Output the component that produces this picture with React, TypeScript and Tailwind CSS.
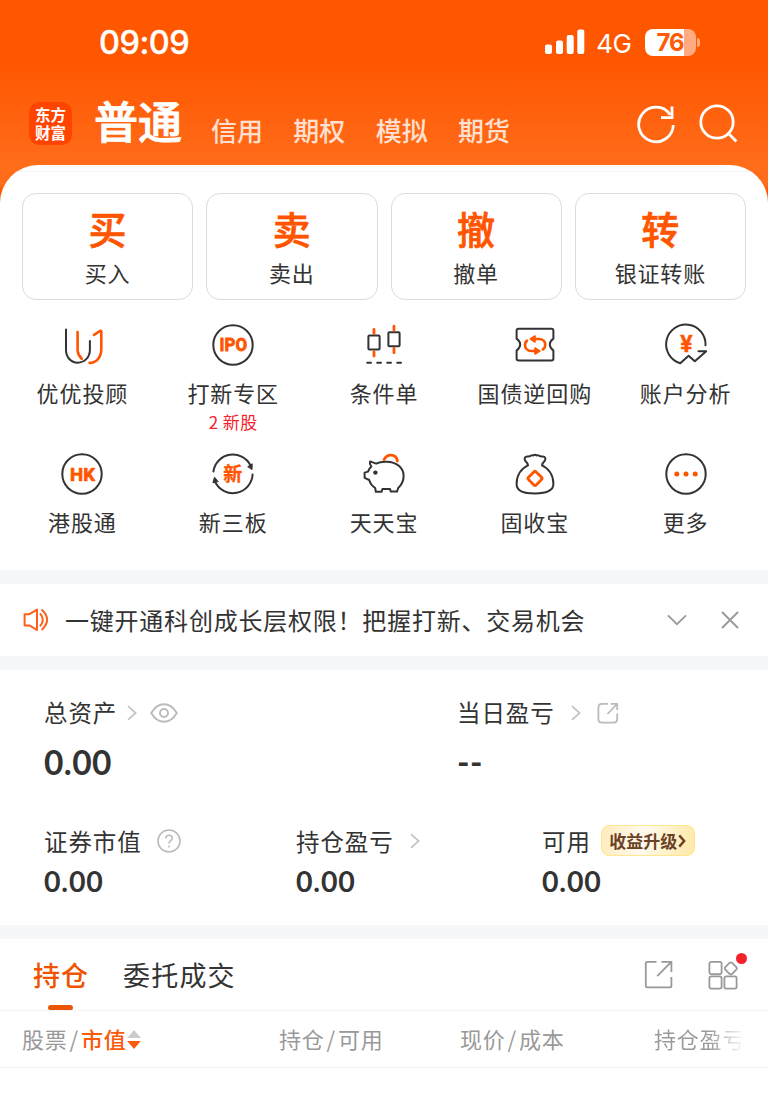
import React from "react";
import { clsx } from "clsx";

const ORANGE = "#ff5500";
const DARK = "#333333";

const TRADE_ACTIONS = [
  { glyph: "买", label: "买入" },
  { glyph: "卖", label: "卖出" },
  { glyph: "撤", label: "撤单" },
  { glyph: "转", label: "银证转账" },
];

const ACCOUNT_TABS = ["信用", "期权", "模拟", "期货"];

function IconFrame({ children }: { children: React.ReactNode }) {
  return (
    <svg
      width="42"
      height="42"
      viewBox="0 0 42 42"
      fill="none"
      stroke={DARK}
      strokeWidth="2"
      strokeLinecap="round"
      strokeLinejoin="round"
      className="overflow-visible"
    >
      {children}
    </svg>
  );
}

function AdvisorIcon() {
  return (
    <IconFrame>
      <path d="M5 5.6V26C5 33 10 38.7 16.6 38.7S28.9 33.5 28.9 26V17" />
      <g stroke={ORANGE} strokeWidth="2.6">
        <path d="M16.6 8V26.5Q16.8 31 20.8 34.8" />
        <path d="M33 10.8L39.2 6.9Q40.3 6.4 40.3 7.6V25C40.3 33.5 35.4 38.6 28.6 38.9" />
      </g>
    </IconFrame>
  );
}

function IpoIcon() {
  return (
    <IconFrame>
      <circle cx="21" cy="21" r="19.7" />
      <text
        x="7.6"
        y="27.4"
        fontSize="18.5"
        fontWeight="700"
        fontFamily="Roboto, sans-serif"
        textLength="27.4"
        lengthAdjust="spacingAndGlyphs"
        fill={ORANGE}
        stroke={ORANGE}
        strokeWidth="0.8"
      >
        IPO
      </text>
    </IconFrame>
  );
}

function ConditionIcon() {
  return (
    <IconFrame>
      <rect x="5.4" y="11.6" width="11.2" height="14" rx="1" />
      <rect x="25.4" y="8.3" width="11.2" height="14" rx="1" />
      <path d="M4.2 38.7H8M14.2 38.7H18M24.2 38.7H28M34.2 38.7H38" />
      <path
        d="M11 5.3V9.5M11 27.8V32M31 2.2V6.2M31 24.5V28.7"
        stroke={ORANGE}
        strokeWidth="2.8"
      />
    </IconFrame>
  );
}

function RepoIcon() {
  return (
    <IconFrame>
      <path d="M4.6 4.8H37.4Q39.4 4.8 39.4 6.8V14.6Q35.8 17.2 35.8 20.5T39.4 26.6V34.4Q39.4 36.4 37.4 36.4H4.6Q2.6 36.4 2.6 34.4V26.6Q6.2 23.8 6.2 20.5T2.6 14.6V6.8Q2.6 4.8 4.6 4.8Z" />
      <g stroke={ORANGE} strokeWidth="2.7">
        <path d="M20 15H24.5C29 15 31.3 17.8 31.3 20.7C31.3 22.8 30.3 24.4 28.9 25.4" />
        <path d="M22 27H17.6C13.2 27 11 24 11 20.9C11 19.2 11.8 17.6 13 16.6" />
        <path
          d="M21 12V18L16.4 15ZM21 24V30L25.8 27Z"
          fill={ORANGE}
          strokeWidth="1.6"
        />
      </g>
    </IconFrame>
  );
}

function AnalysisIcon() {
  return (
    <IconFrame>
      <path d="M40.5 21.3A19.7 19.7 0 1 0 15.3 39.2L23.6 31.7L29.8 37.2L41.2 27.2H33.5" />
      <text
        x="21.4"
        y="27.6"
        fontSize="22.5"
        fontWeight="700"
        fontFamily="Inter, sans-serif"
        textAnchor="middle"
        fill={ORANGE}
        stroke={ORANGE}
        strokeWidth="0.4"
      >
        ¥
      </text>
    </IconFrame>
  );
}

function HkIcon() {
  return (
    <IconFrame>
      <circle cx="21" cy="21" r="19.7" />
      <text
        x="9"
        y="27.5"
        fontSize="18.5"
        fontWeight="700"
        fontFamily="Roboto, sans-serif"
        textLength="25"
        lengthAdjust="spacingAndGlyphs"
        fill={ORANGE}
        stroke={ORANGE}
        strokeWidth="0.7"
      >
        HK
      </text>
    </IconFrame>
  );
}

function NewBoardIcon() {
  return (
    <IconFrame>
      <path d="M1.4 18.5A19.7 19.7 0 0 1 38.4 12.2" />
      <path d="M40.6 21.5A19.7 19.7 0 0 1 3.2 29" />
      <path d="M36 13.6L40.2 10.8L40 16.2ZM1 29.4L2.5 24.2L6 28.4Z" fill={DARK} strokeWidth="1" />
      <text
        x="20.8"
        y="27.8"
        fontSize="19"
        fontWeight="700"
        fontFamily="'Noto Sans CJK SC', sans-serif"
        textAnchor="middle"
        fill={ORANGE}
        stroke={ORANGE}
        strokeWidth="0.3"
      >
        新
      </text>
    </IconFrame>
  );
}

function PiggyIcon() {
  return (
    <IconFrame>
      <path d="M7 8.4L13.2 10.6Q17 8.6 23.6 8.8C33.6 9 40.6 14.6 40.6 23C40.6 28.4 38.2 32.2 35.2 35L34 38.6H27.8L27 36H19.4L18.6 38.8H12.8L12.2 35C9.2 33 7.2 30.6 6.2 27L1.6 24.8V19.6L5 18.6C5.6 16.6 6.8 15 8.4 13.6Q6.4 11 7 8.4Z" />
      <path d="M21 6.6C22.8 3.2 25.4 2.2 27.8 2.2C31 2.2 33.8 4.2 34.4 8" stroke={ORANGE} strokeWidth="2.8" />
      <circle cx="12.4" cy="19.6" r="2.2" fill={DARK} stroke="none" />
    </IconFrame>
  );
}

function MoneyBagIcon() {
  return (
    <IconFrame>
      <path d="M14 12.4Q13.6 10 11.2 7.8C9.8 5.4 11 3.2 13.4 3.4Q15.4 3.6 16.6 2.8Q18 1.8 19.4 2.4Q21 1.2 22.6 2.4Q24 1.8 25.4 2.8Q26.6 3.6 28.6 3.4C31 3.2 32.2 5.4 30.8 7.8Q28.4 10 28 12.4C35 15.6 39.4 22.6 39.4 31C39.4 38 33 40.4 21 40.4S2.6 38 2.6 31C2.6 22.6 7 15.6 14 12.4Z" />
      <rect
        x="15.6"
        y="20"
        width="10.8"
        height="10.8"
        rx="1.6"
        transform="rotate(45 21 25.4)"
        stroke={ORANGE}
        strokeWidth="2.8"
      />
    </IconFrame>
  );
}

function MoreIcon() {
  return (
    <IconFrame>
      <circle cx="21" cy="21" r="19.7" />
      <g fill={ORANGE} stroke="none">
        <circle cx="11.8" cy="21" r="2.5" />
        <circle cx="21" cy="21" r="2.5" />
        <circle cx="30.2" cy="21" r="2.5" />
      </g>
    </IconFrame>
  );
}

const SHORTCUTS = [
  { label: "优优投顾", icon: <AdvisorIcon /> },
  { label: "打新专区", icon: <IpoIcon />, note: "2 新股" },
  { label: "条件单", icon: <ConditionIcon /> },
  { label: "国债逆回购", icon: <RepoIcon /> },
  { label: "账户分析", icon: <AnalysisIcon /> },
  { label: "港股通", icon: <HkIcon /> },
  { label: "新三板", icon: <NewBoardIcon /> },
  { label: "天天宝", icon: <PiggyIcon /> },
  { label: "固收宝", icon: <MoneyBagIcon /> },
  { label: "更多", icon: <MoreIcon /> },
];

function StatusBar() {
  return (
    <div className="flex h-[84px] items-center justify-between pl-[99px] pr-[68px] text-white">
      <span className="mt-[3px] font-[Inter] text-[32.5px] font-medium leading-none tracking-[-0.5px] [-webkit-text-stroke:0.3px_#fff]">
        09:09
      </span>
      <div className="flex items-center">
        <svg width="40" height="26" viewBox="0 0 40 26" fill="#fff">
          <rect x="0" y="15.5" width="7" height="9.5" rx="2" />
          <rect x="11" y="11.5" width="7" height="13.5" rx="2" />
          <rect x="21.7" y="6" width="7" height="19" rx="2" />
          <rect x="32.3" y="0.5" width="7" height="24.5" rx="2" />
        </svg>
        <span className="ml-[11px] mr-px mt-[3px] font-[Inter] text-[26px] leading-none tracking-[-0.5px]">4G</span>
        <div className="ml-3 flex h-[27px] w-[51px] items-center justify-center rounded-[8px] bg-[linear-gradient(90deg,#fff_76%,#ffaa80_76%)]">
          <span className="mt-px font-[Inter] text-[24px] font-bold leading-none tracking-[-1px] text-[#ff5a05]">76</span>
        </div>
        <span className="ml-[1.5px] h-[9px] w-[3px] rounded-r-full bg-[#ffaa80]" />
      </div>
    </div>
  );
}

function TopNav() {
  return (
    <div className="flex h-[81px] items-start pl-[29px] text-white">
      <div className="mt-[18px] h-[43px] w-[43px] break-all rounded-[10px] bg-[#ff4400] py-[4px] pl-[6px] pr-[5px] text-[15.5px] font-bold leading-[17.5px]">
        东方财富
      </div>
      <h1 className="ml-[22px] mt-[10px] text-[44px] font-medium leading-[52px] [-webkit-text-stroke:0.9px_#fff]">
        普通
      </h1>
      <nav className="ml-[29px] mt-[30px] flex gap-[30.3px] text-[26px] font-medium leading-[32px] text-[#ffe0d0]">
        {ACCOUNT_TABS.map((tab) => (
          <span key={tab}>{tab}</span>
        ))}
      </nav>
      <div className="ml-auto mr-[29px] mt-[20px] flex gap-[23px]">
        <svg width="40" height="40" viewBox="0 0 40 40" fill="none" stroke="#fff" strokeWidth="2.8">
          <path d="M37.3 21A17.3 17.3 0 1 1 34.2 10.6" />
          <path d="M36 2.6V13.6H25" />
        </svg>
        <svg width="40" height="40" viewBox="0 0 40 40" fill="none" stroke="#fff" strokeWidth="2.8">
          <circle cx="18" cy="18" r="16.2" />
          <path d="M29.5 29.5L37.4 37.4" />
        </svg>
      </div>
    </div>
  );
}

function Chevron({ className }: { className?: string }) {
  return (
    <svg
      width="10"
      height="16"
      viewBox="0 0 10 16"
      fill="none"
      stroke="#c4c4c4"
      strokeWidth="1.8"
      className={className}
    >
      <path d="M1 1.2L8.6 8L1 14.8" />
    </svg>
  );
}

function NoticeBar() {
  return (
    <div className="flex h-[72px] items-center pl-[23px] pr-[29px] text-[#333]">
      <svg width="26" height="24" viewBox="0 0 26 24" fill="none" stroke="#ff5f1a" strokeWidth="2" strokeLinejoin="round">
        <path d="M1.6 6.2H6.4L14 1.6V22L6.4 17.4H1.6Z" />
        <path d="M17 5.4Q22.6 11.8 17 18.4M18.6 1.6Q29.6 11.8 18.6 22" />
      </svg>
      <span className="-mt-px ml-[16px] whitespace-nowrap text-[24px] leading-8 tracking-[0.78px]">
        一键开通科创成长层权限！把握打新、交易机会
      </span>
      <div className="ml-auto flex items-center gap-[34px]">
        <svg width="20" height="12" viewBox="0 0 20 12" fill="none" stroke="#999" strokeWidth="1.8">
          <path d="M1 1.4L10 10.2L19 1.4" />
        </svg>
        <svg width="18" height="18" viewBox="0 0 18 18" fill="none" stroke="#999" strokeWidth="1.8">
          <path d="M1 1L17 17M17 1L1 17" />
        </svg>
      </div>
    </div>
  );
}

interface MetricProps {
  label: string;
  value: string;
  large?: boolean;
  children?: React.ReactNode;
}

function Metric({ label, value, large, children }: MetricProps) {
  return (
    <div className="flex flex-col">
      <div className="flex h-[34px] items-center">
        <span className="whitespace-nowrap text-[23.5px] leading-8 tracking-[0.9px]">{label}</span>
        {children}
      </div>
      <span
        className={clsx(
          "font-[Lato] font-bold leading-10",
          large ? "mt-[13px] text-[33.5px] tracking-[0.4px]" : "mt-[3px] text-[28.5px] tracking-[0.8px]",
        )}
      >
        {value}
      </span>
    </div>
  );
}

function AssetsPanel() {
  return (
    <section className="h-[255px] pl-[44px] pt-[25px] text-[#333]">
      <div className="grid grid-cols-[413px_1fr]">
        <Metric label="总资产" value="0.00" large>
          <Chevron className="ml-[10px] mt-px" />
          <svg
            width="28"
            height="20"
            viewBox="0 0 28 20"
            fill="none"
            stroke="#bbb"
            strokeWidth="1.9"
            className="ml-[13px] mt-px"
          >
            <path d="M1.2 10Q6.4 1.2 14 1.2T26.8 10Q21.6 18.8 14 18.8T1.2 10Z" />
            <circle cx="14" cy="10" r="4" />
          </svg>
        </Metric>
        <Metric label="当日盈亏" value="--" large>
          <Chevron className="ml-[16px] mt-px" />
          <svg
            width="22"
            height="22"
            viewBox="0 0 22 22"
            fill="none"
            stroke="#bbb"
            strokeWidth="1.8"
            className="ml-[16px] mt-px"
          >
            <path d="M11 1.8H5Q1.4 1.8 1.4 5.4V17Q1.4 20.6 5 20.6H16.6Q20.2 20.6 20.2 17V11.5" />
            <path d="M10.5 12L20 2M13.8 1.8H20.2V8" />
          </svg>
        </Metric>
      </div>
      <div className="mt-[42px] grid grid-cols-[252px_246px_1fr]">
        <Metric label="证券市值" value="0.00">
          <svg
            width="24"
            height="24"
            viewBox="0 0 24 24"
            fill="none"
            stroke="#bbb"
            strokeWidth="1.6"
            className="ml-[15.5px]"
          >
            <circle cx="12" cy="12" r="11" />
            <path d="M8.8 9.6C8.8 7.4 10.2 6.2 12 6.2S15.2 7.4 15.2 9.2C15.2 11.4 12 11.8 12 14.6M12 16.6V18.4" />
          </svg>
        </Metric>
        <Metric label="持仓盈亏" value="0.00">
          <Chevron className="ml-[16px]" />
        </Metric>
        <Metric label="可用" value="0.00">
          <span className="-mt-px ml-[10px] flex h-[31px] w-[94px] items-center justify-center rounded-[8px] border border-[#ffe68f] bg-[linear-gradient(100deg,#ffecbc,#fffaf0_45%,#fff3d2_65%,#ffe9a8)] text-[17px] font-bold leading-7 text-[#6b4226]">
            收益升级
            <svg width="8" height="14" viewBox="0 0 8 14" fill="none" stroke="#6b4226" strokeWidth="2.4" className="ml-px">
              <path d="M1.2 1.4L6.2 7L1.2 12.6" />
            </svg>
          </span>
        </Metric>
      </div>
    </section>
  );
}

function PositionTabs() {
  return (
    <div className="flex h-[72px] items-start border-b border-[#f4f4f4] pl-[33px]">
      <div className="flex h-[71px] flex-col items-center">
        <span className="mt-[17px] text-[27px] font-medium leading-[38px] tracking-[1px] text-[#f05400]">持仓</span>
        <span className="mr-px mt-auto h-[5px] w-[25px] rounded-t-[3px] rounded-b-[2px] bg-[#ea5404]" />
      </div>
      <span className="ml-[34px] mt-[17px] text-[27px] leading-[38px] tracking-[1.2px] text-[#333]">委托成交</span>
      <div className="ml-auto mr-[30px] mt-[21px] flex gap-[34px]">
        <svg width="30" height="30" viewBox="0 0 30 30" fill="none" stroke="#999" strokeWidth="1.8">
          <path d="M12.5 1.8H3.4Q1.8 1.8 1.8 3.4V25.8Q1.8 27.4 3.4 27.4H25.8Q27.4 27.4 27.4 25.8V17" />
          <path d="M13.2 16.2L27 2.2M17.4 1.8H27.4V12" />
        </svg>
        <div className="relative">
          <svg width="30" height="30" viewBox="0 0 30 30" fill="none" stroke="#999" strokeWidth="1.8">
            <rect x="1.4" y="1.9" width="12.2" height="12.2" rx="1.8" />
            <rect x="1.4" y="16.4" width="12.2" height="12.2" rx="1.8" />
            <rect x="16.4" y="16.4" width="12.2" height="12.2" rx="1.8" />
            <rect x="18" y="3.6" width="9.6" height="9.6" rx="2.2" transform="rotate(45 22.8 8.4)" />
          </svg>
          <span className="absolute -right-[9px] -top-[7px] h-[11px] w-[11px] rounded-full bg-[#f5222d]" />
        </div>
      </div>
    </div>
  );
}

function TableHeader() {
  return (
    <div className="grid h-[57px] grid-cols-[257px_181px_194px_1fr] items-center border-b border-[#f2f2f2] pb-[2px] pl-[22px] text-[22px] leading-8 tracking-[0.8px] text-[#999]">
      <div className="flex items-center">
        股票
        <span className="mx-[2px]">/</span>
        <span className="font-medium text-[#fa5a0a]">市值</span>
        <svg width="14" height="19" viewBox="0 0 14 19" className="mt-[2px]">
          <path d="M7 0L13.8 8H0.2Z" fill="#ccc" />
          <path d="M7 19L13.8 11H0.2Z" fill="#fa5a0a" />
        </svg>
      </div>
      <div>
        持仓<span className="mx-[2px]">/</span>可用
      </div>
      <div>
        现价<span className="mx-[2px]">/</span>成本
      </div>
      <div className="w-fit bg-[linear-gradient(90deg,#999_60%,#fff)] bg-clip-text text-transparent">持仓盈亏</div>
    </div>
  );
}

export default function App() {
  return (
    <div className="h-[1104px] w-[768px] overflow-hidden bg-white font-['Noto_Sans_CJK_SC',sans-serif]">
      <div className="bg-[linear-gradient(#ff5600_0px,#ff5600_60px,#ff6c1a_165px,#ff6c1a_184px,#ff5a00_190px)]">
        <header>
          <StatusBar />
          <TopNav />
        </header>
        <main className="h-[405px] rounded-t-[38px] bg-white pt-[6px]">
          <div className="mx-[18px] h-px bg-[#f5f6f8]" />
          <div className="mt-[21px] grid grid-cols-4 gap-[13px] px-[22px]">
            {TRADE_ACTIONS.map((action) => (
              <button
                key={action.label}
                className="flex h-[107px] flex-col items-center rounded-[14px] border border-[#dcdcdc]"
              >
                <span className="mt-[11px] text-[38px] font-medium leading-[46px] text-[#ff5500] [-webkit-text-stroke:0.7px_#ff5500]">
                  {action.glyph}
                </span>
                <span className="mt-[5px] text-[22px] leading-8 tracking-[0.8px] text-[#333]">{action.label}</span>
              </button>
            ))}
          </div>
          <div className="mt-[24px] grid auto-rows-[128.5px] grid-cols-5 px-[7px]">
            {SHORTCUTS.map((item) => (
              <div key={item.label} className="flex flex-col items-center whitespace-nowrap">
                {item.icon}
                <span className="mt-[10px] text-[22px] leading-8 tracking-[0.9px] text-[#333]">{item.label}</span>
                {item.note && (
                  <span className="mt-[3px] text-[17px] leading-[22px] tracking-[0.4px] text-[#f5222d]">{item.note}</span>
                )}
              </div>
            ))}
          </div>
        </main>
      </div>
      <div className="h-[14px] bg-[#f6f7f9]" />
      <NoticeBar />
      <div className="h-[14px] bg-[#f6f7f9]" />
      <AssetsPanel />
      <div className="h-[14px] bg-[#f6f7f9]" />
      <PositionTabs />
      <TableHeader />
    </div>
  );
}
